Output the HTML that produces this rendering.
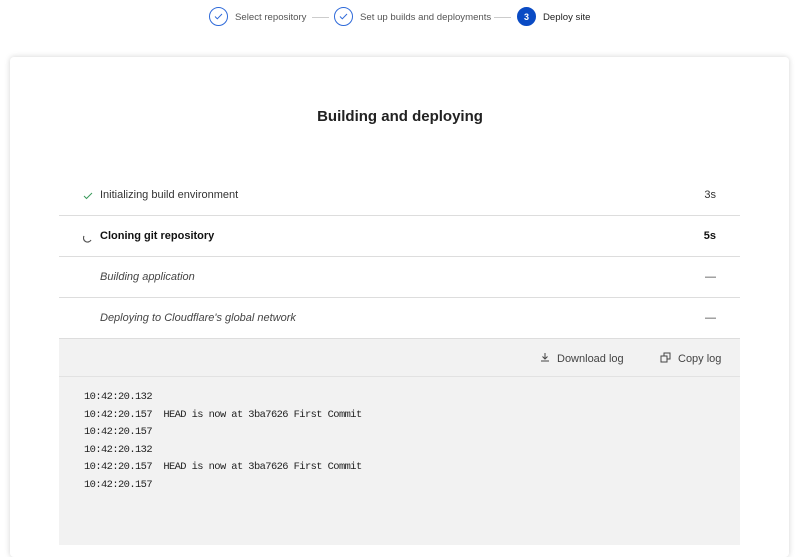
<!DOCTYPE html>
<html><head><style>
body{margin:0;width:800px;height:545px;overflow:hidden;background:#fff;font-family:"Liberation Sans",sans-serif;position:relative}
.steps{position:absolute;top:0;left:0;width:800px;height:34px;font-size:9.6px;color:#555}
.c{position:absolute;top:7px;width:19px;height:19px;border:1px solid #2f6ad9;border-radius:50%;box-sizing:border-box}
.c svg{position:absolute;left:4px;top:4px}
.lbl{position:absolute;top:12px}
.ln{position:absolute;top:17px;height:1px;background:#ccc;width:17px}
.card{position:absolute;left:10px;top:57px;width:779px;height:500px;background:#fff;border-radius:4px;box-shadow:0 0 6px rgba(0,0,0,.18)}
h1{position:absolute;top:108px;left:0;width:800px;text-align:center;font-size:15px;font-weight:bold;color:#222;margin:0}
.row{position:absolute;left:59px;width:681px;height:41px;border-bottom:1px solid #ddd;font-size:11px;color:#333}
.row .t{position:absolute;left:41px;top:15px}
.row .r{position:absolute;right:24px;top:15px}
.log{position:absolute;left:59px;top:339px;width:681px;height:206px;background:#f2f2f2}
.bar{height:37px;border-bottom:1px solid #e2e2e2;font-size:11px;color:#444;position:relative}
.pre{font-family:"Liberation Mono",monospace;font-size:10.4px;letter-spacing:-0.57px;color:#222;position:absolute;left:25px;top:50px;line-height:17.5px;white-space:pre}
</style></head><body>
<div class="steps">
<div class="c" style="left:209px"><svg width="9" height="9" viewBox="0 0 9 9"><path d="M1 4.5l2.3 2.3L8 2" fill="none" stroke="#2f6ad9" stroke-width="1"/></svg></div>
<span class="lbl" style="left:235px">Select repository</span>
<div class="ln" style="left:312px"></div>
<div class="c" style="left:334px"><svg width="9" height="9" viewBox="0 0 9 9"><path d="M1 4.5l2.3 2.3L8 2" fill="none" stroke="#2f6ad9" stroke-width="1"/></svg></div>
<span class="lbl" style="left:360px">Set up builds and deployments</span>
<div class="ln" style="left:494px"></div>
<div class="c" style="left:517px;background:#0a4bc4;border-color:#0a4bc4;color:#fff;font-weight:bold;font-size:9px;text-align:center;line-height:18px">3</div>
<span class="lbl" style="left:543px;color:#222">Deploy site</span>
</div>
<div class="card"></div>
<h1>Building and deploying</h1>
<div class="row" style="top:174px"><svg style="position:absolute;left:24px;top:18px" width="10" height="8" viewBox="0 0 10 8"><path d="M1 4l2.5 2.5L9 1" fill="none" stroke="#3a9a5b" stroke-width="1"/></svg><span class="t">Initializing build environment</span><span class="r">3s</span></div>
<div class="row" style="top:215px;font-weight:bold;color:#111"><svg style="position:absolute;left:24px;top:19px" width="10" height="10" viewBox="0 0 10 10"><path d="M1 2a4 4 0 0 0 7 4" fill="none" stroke="#555" stroke-width="1.2"/></svg><span class="t">Cloning git repository</span><span class="r">5s</span></div>
<div class="row" style="top:256px;font-style:italic;color:#444"><span class="t">Building application</span><span class="r" style="font-style:normal">—</span></div>
<div class="row" style="top:297px;font-style:italic;color:#444"><span class="t">Deploying to Cloudflare's global network</span><span class="r" style="font-style:normal">—</span></div>
<div class="log">
<div class="bar">
<svg style="position:absolute;left:481px;top:13px" width="10" height="10" viewBox="0 0 10 10"><path d="M5 1v6M2.5 4.5L5 7l2.5-2.5M1 9h8" fill="none" stroke="#444" stroke-width="1"/></svg>
<span style="position:absolute;left:498px;top:14px">Download log</span>
<svg style="position:absolute;left:601px;top:13px" width="11" height="11" viewBox="0 0 11 11"><path d="M1 4h6v6H1zM4 4V1h6v6H7" fill="none" stroke="#444" stroke-width="1"/></svg>
<span style="position:absolute;left:619px;top:14px">Copy log</span>
</div>
<div class="pre">10:42:20.132
10:42:20.157  HEAD is now at 3ba7626 First Commit
10:42:20.157
10:42:20.132
10:42:20.157  HEAD is now at 3ba7626 First Commit
10:42:20.157</div>
</div>
</body></html>
